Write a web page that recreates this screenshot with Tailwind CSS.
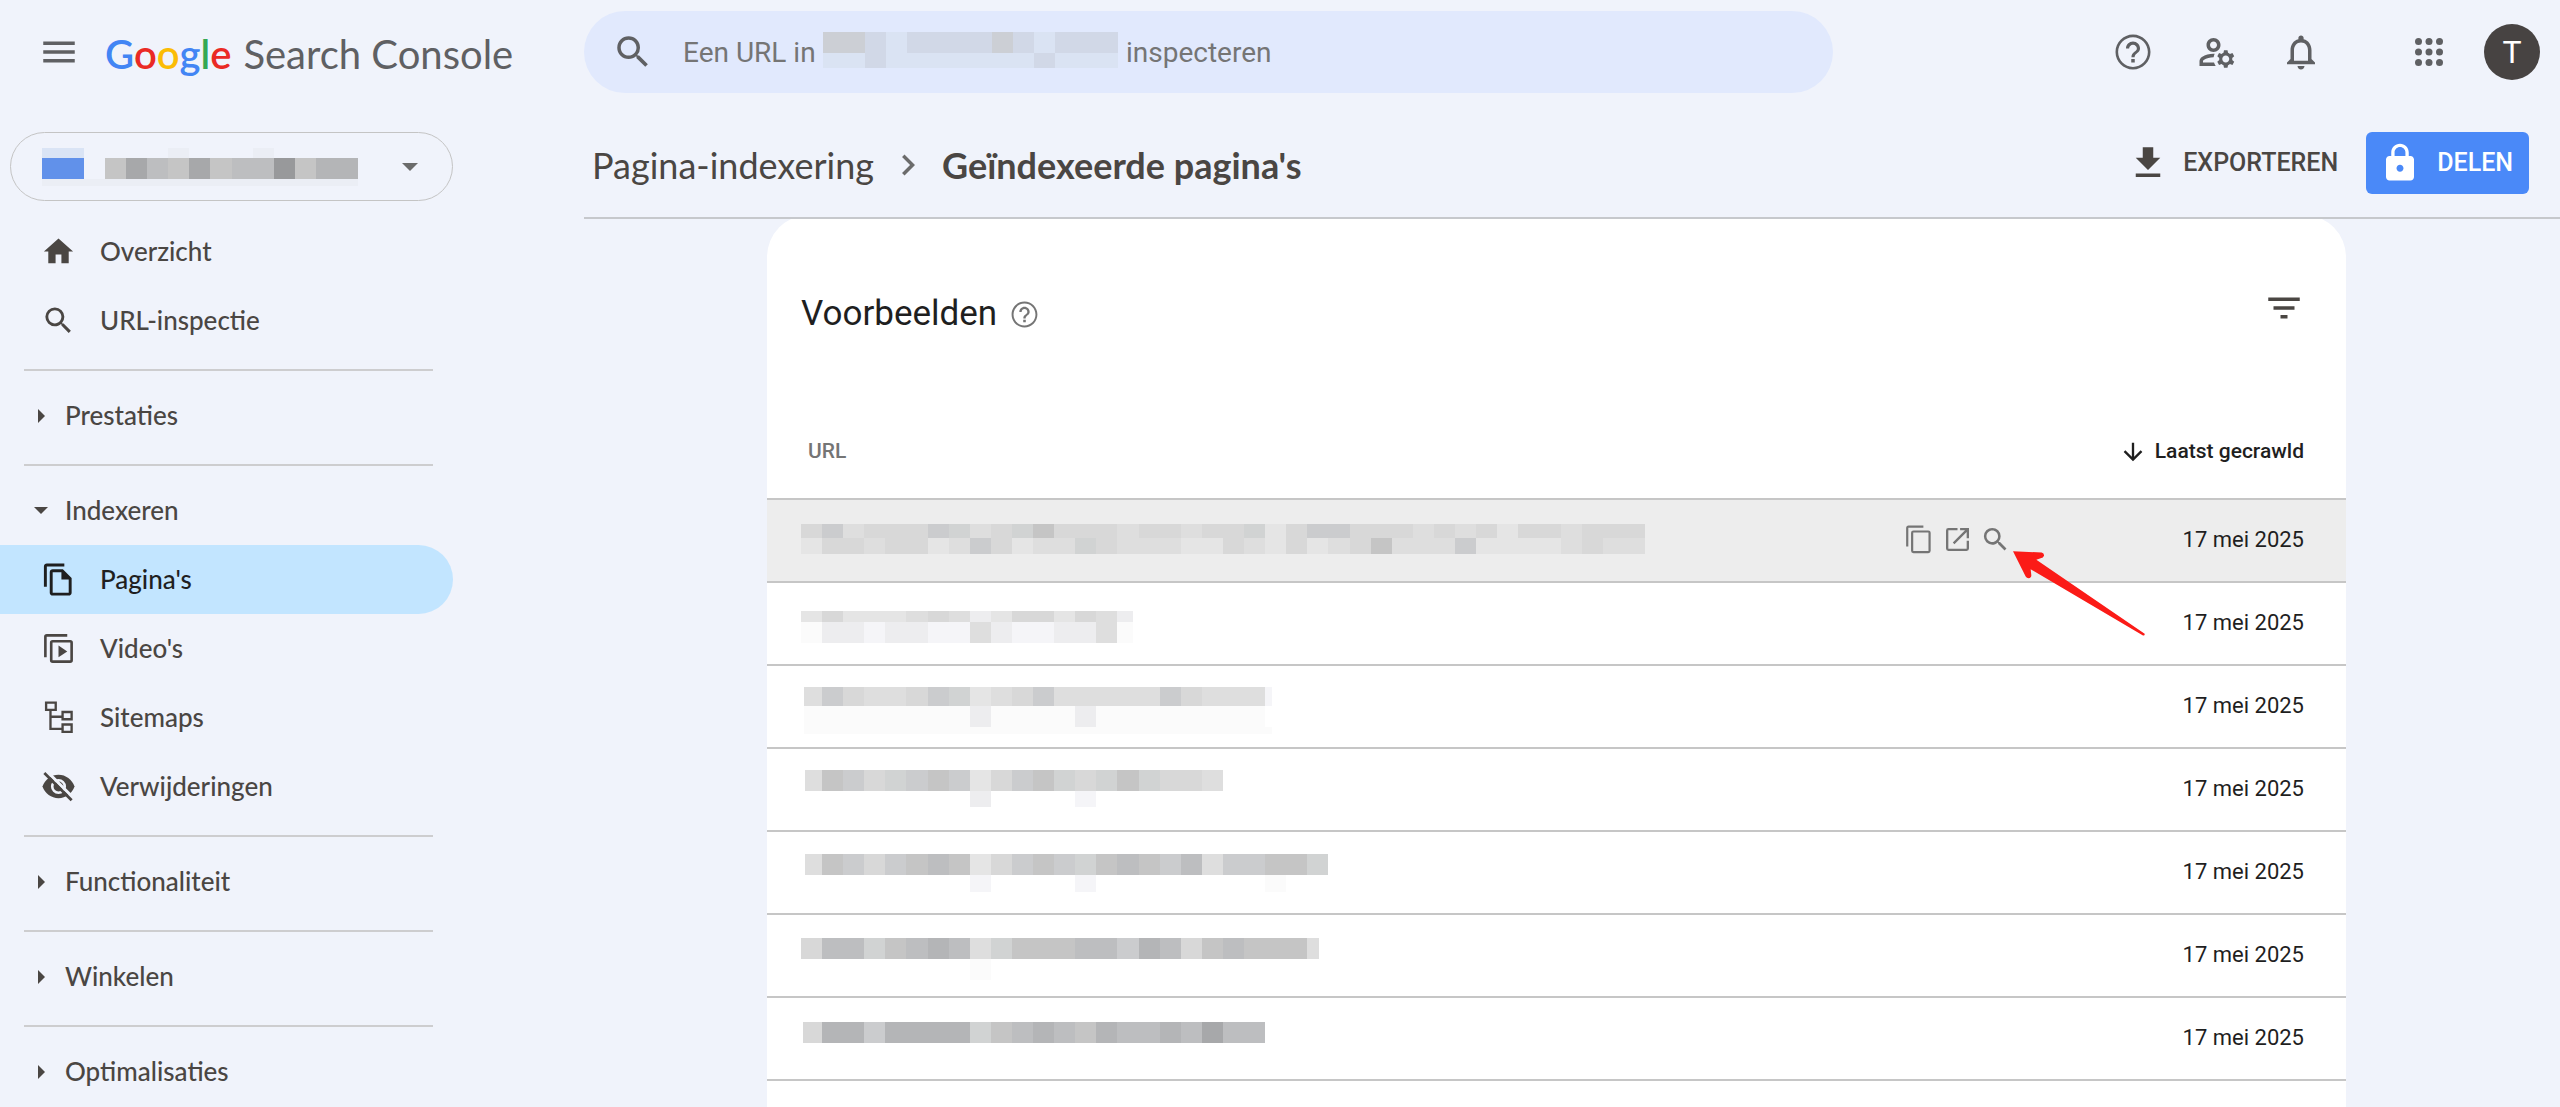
<!DOCTYPE html>
<html lang="nl">
<head>
  <meta charset="UTF-8" />
  <meta name="viewport" content="width=device-width, initial-scale=1.0" />
  <title>Geïndexeerde pagina's – Search Console</title>
  <script src="https://cdn.jsdelivr.net/npm/@tailwindcss/browser@4"></script>
</head>
<body class="h-screen flex flex-col overflow-hidden bg-[#f0f3fb] text-[#1f1f1f] font-['Roboto',sans-serif]">

  <!-- Header -->
  <header class="flex items-center h-26 shrink-0 pr-5 text-[#5f6063]">
    <div class="w-[584px] shrink-0 flex items-center pl-[38px] gap-[25px]">
      <button type="button" aria-label="Menu"><svg class="size-[42px]" viewBox="0 0 24 24" fill="currentColor"><path d="M3 18h18v-2H3v2zm0-5h18v-2H3v2zm0-7v2h18V6H3z"/></svg></button>
      <a href="#" class="flex items-baseline gap-3 pt-1 font-['Lato',sans-serif] text-[40px] leading-[48px]">
        <span class="font-semibold text-[#4285f4]">G<span class="text-[#ea2a25]">o</span><span class="text-[#fbbc05]">o</span>g<span class="text-[#34a853]">l</span><span class="text-[#ea2a25]">e</span></span>
        <span>Search Console</span>
      </a>
    </div>
    <div class="flex-1 max-w-[1249px] h-[82px] rounded-full bg-[#e1e9fd] flex items-center pl-7 text-[28px] text-[#757575]">
      <svg class="size-[42px] mr-[29px] text-[#5f6063]" viewBox="0 0 24 24" fill="currentColor"><path d="M15.5 14h-.79l-.28-.27A6.471 6.471 0 0 0 16 9.5 6.5 6.5 0 1 0 9.5 16c1.61 0 3.09-.59 4.23-1.57l.27.28v.79l5 4.99L20.49 19l-4.99-5zm-6 0C7.01 14 5 11.99 5 9.5S7.01 5 9.5 5 14 7.01 14 9.5 11.99 14 9.5 14z"/></svg>
      <input id="inspect" type="text" placeholder="Een URL in" aria-label="Een URL inspecteren" class="w-[140px] pt-0.5 placeholder:text-[#757575] focus:outline-none" />
      <svg data-mosaic="search" class="block" width="295" height="40"></svg>
      <label for="inspect" class="ml-2 pt-0.5">inspecteren</label>
    </div>
    <div class="ml-auto flex items-center gap-[42px]">
      <button type="button" aria-label="Help"><svg class="size-[42px]" viewBox="0 0 24 24" fill="currentColor"><path d="M11 18h2v-2h-2v2zm1-16C6.48 2 2 6.48 2 12s4.48 10 10 10 10-4.48 10-10S17.52 2 12 2zm0 18.5c-4.700 0-8.500-3.800-8.500-8.500S7.300 3.500 12 3.500s8.500 3.800 8.500 8.500-3.800 8.500-8.500 8.500zM12 6c-2.210 0-4 1.790-4 4h1.800c0-1.200 1-2.200 2.200-2.200s2.200 1 2.200 2.200c0 2-3.100 1.750-3.100 5h1.800c0-2.250 3.100-2.500 3.100-5 0-2.210-1.790-4-4-4z"/></svg></button>
      <button type="button" aria-label="Gebruikersinstellingen"><svg class="size-[42px]" viewBox="0 0 24 24" fill="currentColor"><path d="M4 18v-.65c0-.34.16-.66.41-.81C6.1 15.53 8.03 15 10 15c.03 0 .05 0 .08.01.1-.7.3-1.37.59-1.98-.22-.02-.44-.03-.67-.03-2.42 0-4.68.67-6.61 1.82C2.51 15.34 2 16.32 2 17.35V20h9.26c-.42-.6-.75-1.28-.97-2H4zM10 12c2.210 0 4-1.790 4-4s-1.790-4-4-4-4 1.790-4 4 1.790 4 4 4zm0-6c1.100 0 2 .9 2 2s-.9 2-2 2-2-.9-2-2 .9-2 2-2zM20.750 16c0-.22-.03-.42-.06-.63l1.140-1.010-1-1.730-1.450.49c-.32-.27-.68-.48-1.080-.63L18 11h-2l-.3 1.490c-.4.15-.76.36-1.080.63l-1.450-.49-1 1.730 1.140 1.010c-.03.21-.06.41-.06.63s.03.42.06.63l-1.140 1.010 1 1.730 1.450-.49c.32.27.68.48 1.080.63L16 21h2l.3-1.490c.4-.15.76-.36 1.080-.63l1.450.49 1-1.730-1.140-1.010c.03-.21.06-.41.06-.63zM17 18c-1.100 0-2-.9-2-2s.9-2 2-2 2 .9 2 2-.9 2-2 2z"/></svg></button>
      <button type="button" aria-label="Meldingen"><svg class="size-[42px]" viewBox="0 0 24 24" fill="currentColor"><path d="M12 22c1.100 0 2-.9 2-2h-4c0 1.100.9 2 2 2zm6-6v-5c0-3.070-1.630-5.640-4.500-6.320V4c0-.83-.67-1.500-1.500-1.500s-1.500.67-1.500 1.500v.68C7.640 5.360 6 7.920 6 11v5l-2 2v1h16v-1l-2-2zm-2 1H8v-6c0-2.480 1.510-4.500 4-4.500s4 2.020 4 4.500v6z"/></svg></button>
      <button type="button" aria-label="Google-apps" class="ml-11"><svg class="size-[42px]" viewBox="0 0 24 24" fill="currentColor"><circle cx="6" cy="6" r="2"/><circle cx="12" cy="6" r="2"/><circle cx="18" cy="6" r="2"/><circle cx="6" cy="12" r="2"/><circle cx="12" cy="12" r="2"/><circle cx="18" cy="12" r="2"/><circle cx="6" cy="18" r="2"/><circle cx="12" cy="18" r="2"/><circle cx="18" cy="18" r="2"/></svg></button>
      <button type="button" aria-label="Account" class="-ml-2 size-14 rounded-full bg-[#474342] text-white text-[32px]">T</button>
    </div>
  </header>

  <div class="flex flex-1 min-h-0">
    <!-- Sidebar -->
    <aside class="w-[584px] shrink-0 pt-7 font-['Lato',sans-serif] font-medium text-[26px] text-[#4a4643]">
      <button type="button" aria-label="Property selecteren" class="ml-[10px] w-[443px] h-[69px] rounded-full border border-[#c4c4c4] flex items-center pl-[31px]">
        <svg data-mosaic="property" class="block" width="324" height="44"></svg>
        <svg class="ml-9 w-4 h-2" viewBox="0 0 16 8" fill="#6b6b6b"><path d="M0 0h16L8 8z"/></svg>
      </button>
      <nav class="mt-4">
        <a href="#" class="flex items-center h-[69px] w-[453px] pl-[41px] gap-6"><svg class="size-[35px]" viewBox="0 0 24 24" fill="currentColor"><path d="M10 20v-6h4v6h5v-8h3L12 3 2 12h3v8z"/></svg>Overzicht</a>
        <a href="#" class="flex items-center h-[69px] w-[453px] pl-[41px] gap-6"><svg class="size-[35px]" viewBox="0 0 24 24" fill="currentColor"><path d="M15.5 14h-.79l-.28-.27A6.471 6.471 0 0 0 16 9.5 6.5 6.5 0 1 0 9.5 16c1.61 0 3.09-.59 4.23-1.57l.27.28v.79l5 4.99L20.49 19l-4.99-5zm-6 0C7.01 14 5 11.99 5 9.5S7.01 5 9.5 5 14 7.01 14 9.5 11.99 14 9.5 14z"/></svg>URL-inspectie</a>
        <hr class="ml-6 w-[409px] mt-[14px] mb-[10px] border-t-2 border-[#cdcdcf]" />
        <a href="#" class="flex items-center h-[69px] pl-[34px] gap-[17px]"><svg class="size-[14px]" viewBox="0 0 14 14" fill="currentColor"><path d="M4 0v14l7-7z"/></svg>Prestaties</a>
        <hr class="ml-6 w-[409px] mt-[14px] mb-[10px] border-t-2 border-[#cdcdcf]" />
        <a href="#" class="flex items-center h-[69px] pl-[34px] gap-[17px]"><svg class="size-[14px]" viewBox="0 0 14 14" fill="currentColor"><path d="M0 3h14l-7 7z"/></svg>Indexeren</a>
        <a href="#" aria-current="page" class="flex items-center h-[69px] w-[453px] pl-[41px] gap-6 rounded-r-full bg-[#c2e5ff] text-[#1f1f1f]"><svg class="size-[35px]" viewBox="0 0 24 24" fill="currentColor"><path d="M16 1H4c-1.100 0-2 .9-2 2v14h2V3h12V1zM15 5H8c-1.100 0-2 .9-2 2v14c0 1.100.9 2 2 2h11c1.100 0 2-.9 2-2V11l-6-6zM8 21V7h6v5h5v9H8z"/></svg>Pagina's</a>
        <a href="#" class="flex items-center h-[69px] w-[453px] pl-[41px] gap-6"><svg class="size-[35px]" viewBox="0 0 24 24" fill="none" stroke="currentColor" stroke-width="1.800"><path d="M3 18V4q0-1 1-1h14"/><rect x="7" y="7" width="14" height="14" rx="1"/><path d="M12 10v8l6-4z" fill="currentColor" stroke="none"/></svg>Video's</a>
        <a href="#" class="flex items-center h-[69px] w-[453px] pl-[41px] gap-6"><svg class="size-[35px]" viewBox="0 0 24 24" fill="none" stroke="currentColor" stroke-width="1.600"><path d="M3.500 1.800h6.600v5H3.500zM14.800 8.200h6.200v5h-6.200zM14.800 16.800h6.200v5h-6.200zM6.500 7v12.800h8.300M6.500 11.500h8.300"/></svg>Sitemaps</a>
        <a href="#" class="flex items-center h-[69px] w-[453px] pl-[41px] gap-6"><svg class="size-[35px]" viewBox="0 0 24 24" fill="none"><path fill="currentColor" d="M12 4C7 4 2.730 7.300 1 12c1.730 4.700 6 8 11 8s9.270-3.300 11-8c-1.730-4.700-6-8-11-8z"/><circle cx="12" cy="12" r="4.300" stroke="#f0f3fb" stroke-width="1.800"/><path d="M3.700 1.300l19 19" stroke="#f0f3fb" stroke-width="2"/><path d="M2.300 2.700 21 21.400" stroke="currentColor" stroke-width="1.900"/></svg>Verwijderingen</a>
        <hr class="ml-6 w-[409px] mt-[14px] mb-[10px] border-t-2 border-[#cdcdcf]" />
        <a href="#" class="flex items-center h-[69px] pl-[34px] gap-[17px]"><svg class="size-[14px]" viewBox="0 0 14 14" fill="currentColor"><path d="M4 0v14l7-7z"/></svg>Functionaliteit</a>
        <hr class="ml-6 w-[409px] mt-[14px] mb-[10px] border-t-2 border-[#cdcdcf]" />
        <a href="#" class="flex items-center h-[69px] pl-[34px] gap-[17px]"><svg class="size-[14px]" viewBox="0 0 14 14" fill="currentColor"><path d="M4 0v14l7-7z"/></svg>Winkelen</a>
        <hr class="ml-6 w-[409px] mt-[14px] mb-[10px] border-t-2 border-[#cdcdcf]" />
        <a href="#" class="flex items-center h-[69px] pl-[34px] gap-[17px]"><svg class="size-[14px]" viewBox="0 0 14 14" fill="currentColor"><path d="M4 0v14l7-7z"/></svg>Optimalisaties</a>
      </nav>
    </aside>

    <!-- Main -->
    <main class="flex-1 min-w-0 flex flex-col">
      <div class="h-[115px] shrink-0 flex items-center pt-1 pl-2 pr-[31px] border-b-2 border-[#c6c8cc] text-[#4a4643]">
        <nav aria-label="Kruimelpad" class="flex items-center font-['Lato',sans-serif] text-[36px] leading-[42px] pt-1">
          <a href="#">Pagina-indexering</a>
          <svg class="mx-[13px] size-[42px]" viewBox="0 0 24 24" fill="#6b6b6b"><path d="M8.590 16.590 13.170 12 8.590 7.410 10 6l6 6-6 6z"/></svg>
          <h1 class="font-bold">Geïndexeerde pagina's</h1>
        </nav>
        <div class="ml-auto flex items-center text-[25px] font-medium">
          <button type="button" class="flex items-center gap-[14px] mr-[28px]"><svg class="size-[42px]" viewBox="0 0 24 24" fill="currentColor"><path d="M19 9h-4V3H9v6H5l7 7 7-7zM5 18v2h14v-2H5z"/></svg>EXPORTEREN</button>
          <button type="button" class="flex items-center h-[62px] pl-[13px] pr-4 gap-4 rounded-md bg-[#4a89f8] text-white"><svg class="size-[42px]" viewBox="0 0 24 24" fill="currentColor"><path d="M18 8h-1V6c0-2.760-2.240-5-5-5S7 3.240 7 6v2H6c-1.100 0-2 .9-2 2v10c0 1.100.9 2 2 2h12c1.100 0 2-.9 2-2V10c0-1.100-.9-2-2-2zm-6 9c-1.100 0-2-.9-2-2s.9-2 2-2 2 .9 2 2-.9 2-2 2zm3.100-9H8.900V6c0-1.710 1.390-3.100 3.100-3.100s3.100 1.390 3.100 3.100v2z"/></svg>DELEN</button>
        </div>
      </div>

      <div class="flex-1 min-h-0 overflow-hidden flex flex-col pl-[183px] pr-[214px]">
        <section class="-mt-1 flex-1 rounded-t-[42px] bg-white pt-[72px]">
          <div class="flex items-center pl-[34px] pr-[41px] h-[42px]">
            <h2 class="mt-3 text-[35px] leading-[42px]">Voorbeelden</h2>
            <button type="button" aria-label="Uitleg" class="ml-3 mt-3 text-[#757575]"><svg class="size-[31px]" viewBox="0 0 24 24" fill="currentColor"><path d="M11 18h2v-2h-2v2zm1-16C6.480 2 2 6.480 2 12s4.480 10 10 10 10-4.480 10-10S17.520 2 12 2zm0 18.500c-4.700 0-8.500-3.800-8.500-8.500S7.300 3.500 12 3.500s8.500 3.800 8.500 8.500-3.800 8.500-8.500 8.500zM12 6c-2.210 0-4 1.790-4 4h1.800c0-1.200 1-2.200 2.200-2.200s2.200 1 2.200 2.200c0 2-3.100 1.750-3.100 5h1.800c0-2.250 3.100-2.500 3.100-5 0-2.210-1.790-4-4-4z"/></svg></button>
            <button type="button" aria-label="Filteren" class="ml-auto text-[#4a4643]"><svg class="size-[42px]" viewBox="0 0 24 24" fill="currentColor"><path d="M10 18h4v-2h-4v2zM3 6v2h18V6H3zm3 7h12v-2H6v2z"/></svg></button>
          </div>
          <table class="mt-12 w-full table-fixed">
            <thead>
              <tr class="h-[122px] border-b-2 border-[#c6c6c6] text-[21px]">
                <th class="pl-[41px] pt-7 text-left font-medium text-[#757575]">URL</th>
                <th class="w-[200px]"></th>
                <th class="w-[297px] pr-[42px] pt-7 font-medium"><span class="flex items-center justify-end gap-2"><svg class="size-7" viewBox="0 0 24 24" fill="currentColor"><path d="m20 12-1.410-1.410L13 16.170V4h-2v12.170l-5.580-5.590L4 12l8 8 8-8z"/></svg>Laatst gecrawld</span></th>
              </tr>
            </thead>
            <tbody id="rows" class="text-[22px]"></tbody>
          </table>
        </section>
      </div>
    </main>
  </div>

  <template id="row-tpl">
    <tr class="h-[83px] border-b-2 border-[#c6c6c6]">
      <td class="pl-[34px] pt-0.5 align-top"><svg class="block" width="860" height="78"></svg></td>
      <td class="actions pr-[38px] pb-0.5"></td>
      <td class="pr-[42px] pb-0.5 text-right whitespace-nowrap">17 mei 2025</td>
    </tr>
  </template>

  <template id="actions-tpl">
    <div class="relative flex justify-end items-center gap-[7px] text-[#757575]">
      <button type="button" aria-label="URL kopiëren"><svg class="size-[31px]" viewBox="0 0 24 24" fill="none" stroke="currentColor" stroke-width="1.700"><path d="M2.500 17.500V3q0-1 1-1h11.500"/><rect x="6.300" y="5.800" width="13.500" height="16" rx="1"/></svg></button>
      <button type="button" aria-label="URL openen"><svg class="size-[31px]" viewBox="0 0 24 24" fill="none" stroke="currentColor" stroke-width="1.800"><path d="M12 4H5q-1 0-1 1v14q0 1 1 1h14q1 0 1-1v-6M14 4h6v7M20 4 9 15"/></svg></button>
      <button type="button" aria-label="URL inspecteren"><svg class="size-[31px]" viewBox="0 0 24 24" fill="currentColor"><path d="M15.500 14h-.79l-.28-.27A6.471 6.471 0 0 0 16 9.500 6.500 6.500 0 1 0 9.500 16c1.610 0 3.090-.59 4.230-1.570l.27.28v.79l5 4.990L20.490 19l-4.990-5zm-6 0C7.010 14 5 11.990 5 9.500S7.010 5 9.500 5 14 7.010 14 9.500 11.990 14 9.500 14z"/></svg></button>
      <!-- pijl naar het vergrootglas -->
      <svg class="absolute left-full top-[27px] ml-0.5 w-[132px] h-[85px]" viewBox="0 0 396 254" fill="#fb1b17"><path d="M0 0 86 4q8 2 7 10-2 7-10 7l-13 5L395 248q1 6-5 5L53 54l2 18q0 8-8 9-6 0-9-5z"/></svg>
    </div>
  </template>

<script>
// kleuren van de afgeschermde blokjes
const shades = {
  k:'#fbfbfb', a:'#f5f5f8', b:'#ededef', c:'#e5e5e5', d:'#dedede', e:'#d8d8d8',
  f:'#d1d3d3', g:'#cbccce', h:'#c5c5c5', i:'#bdbec0', j:'#b4b5b7', l:'#a7a8aa', m:'#98999b',
  s:'#d1d8e7', t:'#dae3f3', u:'#cccfd5', B:'#6191ea', C:'#dae4f5', n:'#ebeef5'
};
const step = 21.1;

// [x, y, hoogte, breedte eerste blok, blokken, breedte laatste blok]
const mosaics = {
  search:   [[0,0,21,21,'uustssssustsss'],[0,21,15,21,'ttstttttttsttt']],
  property: [[0,3,10,21,'CC'],[0,13,21,21,'BB'],[0,34,7,21,'nnnnnnnnnnnnnnn'],[63,13,21,21,'hlihlhiimhjj'],[63,3,10,21,'...n...n']]
};
const rows = [
  [[0,22,14,21,'egdeeegfdefheeedeedeefceggeeededeceedeee'],[0,36,16,21,'ceedeecdgecddfedddccedcecdehdddgccccdedd']],
  [[0,26,11,21,'cecccdedbceecedb',16],[0,37,21,21,'kbbabbaadbaabbdk',16]],
  [[3,19,19,18,'dgeddegfcdegdddddgeddda',7],[3,38,21,18,'kkkkkkkkbkkkkbkkkkkkkk'],[3,59,7,18,'kkkkkkkkkkkkkkkkkkkkkkk',7]],
  [[4,19,21,17,'dhgefghgceghfefhfeed'],[4,40,16,17,'........b....a']],
  [[4,20,21,17,'dhgeghihceghgfhihgidgghhf'],[4,41,17,17,'........a....a........k']],
  [[0,21,21,21,'eiifhijidfhhhiigjiehihhhd',12],[0,42,21,21,'........k']],
  [[2,22,21,19,'ejjgjjjjfhijihjiijilii']]
];

function drawMosaic(svg, strips){
  strips.forEach(([x0,y,h,w0,cells,wLast])=>{
    [...cells].forEach((c,i)=>{
      if(c==='.') return;
      const r=document.createElementNS('http://www.w3.org/2000/svg','rect');
      const x=i===0 ? x0 : Math.round(x0+w0+(i-1)*step);
      let w=i===0 ? w0 : Math.round(x0+w0+i*step)-x;
      if(wLast && i===cells.length-1) w=wLast;
      r.setAttribute('x',x);
      r.setAttribute('y',y);
      r.setAttribute('width',w);
      r.setAttribute('height',h);
      r.setAttribute('fill',shades[c]);
      svg.appendChild(r);
    });
  });
}

document.querySelectorAll('[data-mosaic]').forEach(svg=>drawMosaic(svg,mosaics[svg.dataset.mosaic]));

const body = document.getElementById('rows');
rows.forEach((strips,i)=>{
  const tr=document.getElementById('row-tpl').content.cloneNode(true).firstElementChild;
  drawMosaic(tr.querySelector('svg'),strips);
  if(i===0){
    tr.classList.add('bg-[#ededed]');
    tr.querySelector('.actions').appendChild(document.getElementById('actions-tpl').content.cloneNode(true));
  }
  body.appendChild(tr);
});
</script>
</body>
</html>
